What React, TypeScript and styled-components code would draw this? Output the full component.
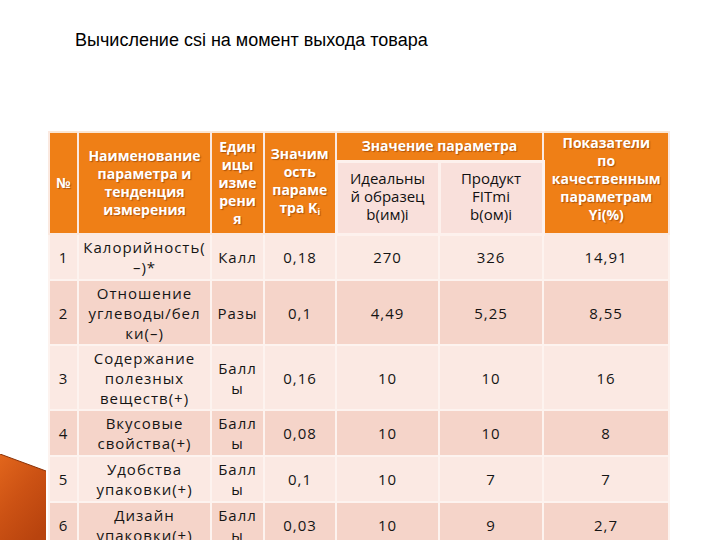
import styled, { createGlobalStyle } from "styled-components";

const GlobalStyle = createGlobalStyle`
  html, body {
    margin: 0;
    padding: 0;
    background: #ffffff;
  }
`;

type Row = {
  num: string;
  name: string[];
  unit: string[];
  weight: string;
  ideal: string;
  product: string;
  score: string;
  height: number;
};

const rows: Row[] = [
  { num: "1", name: ["Калорийность(", "–)*"], unit: ["Калл"], weight: "0,18", ideal: "270", product: "326", score: "14,91", height: 46 },
  { num: "2", name: ["Отношение", "углеводы/бел", "ки(–)"], unit: ["Разы"], weight: "0,1", ideal: "4,49", product: "5,25", score: "8,55", height: 65 },
  { num: "3", name: ["Содержание", "полезных", "веществ(+)"], unit: ["Балл", "ы"], weight: "0,16", ideal: "10", product: "10", score: "16", height: 65 },
  { num: "4", name: ["Вкусовые", "свойства(+)"], unit: ["Балл", "ы"], weight: "0,08", ideal: "10", product: "10", score: "8", height: 46 },
  { num: "5", name: ["Удобства", "упаковки(+)"], unit: ["Балл", "ы"], weight: "0,1", ideal: "10", product: "7", score: "7", height: 46 },
  { num: "6", name: ["Дизайн", "упаковки(+)"], unit: ["Балл", "ы"], weight: "0,03", ideal: "10", product: "9", score: "2,7", height: 46 },
];

const colWidths = [29, 133, 53, 72, 103, 104, 126];

// разбивка строк как на слайде
const lines = (parts: string[]) =>
  parts.map((p, i) => (
    <span key={i}>
      {p}
      {i < parts.length - 1 && <br />}
    </span>
  ));

export default function App() {
  return (
    <>
      <GlobalStyle />
      <Page>
        <Title>Вычисление csi на момент выхода товара</Title>
        <Body>
          <Gutter>
            <Corner viewBox="0 0 48 95" preserveAspectRatio="none">
              <defs>
                <linearGradient id="cornerFill" x1="0" y1="0" x2="0.6" y2="1">
                  <stop offset="0" stopColor="#e2661c" />
                  <stop offset="0.5" stopColor="#cc5214" />
                  <stop offset="1" stopColor="#b8430e" />
                </linearGradient>
              </defs>
              <polygon points="0,0 46,17 46,95 0,95" fill="url(#cornerFill)" />
              <line x1="0" y1="0" x2="46" y2="17" stroke="#8a3208" strokeWidth="1" />
            </Corner>
          </Gutter>
          <Table>
            <colgroup>
              {colWidths.map((w, i) => (
                <col key={i} style={{ width: w }} />
              ))}
            </colgroup>
            <thead>
              <tr style={{ height: 29 }}>
                <HeadCell rowSpan={2}>№</HeadCell>
                <HeadCell rowSpan={2}>
                  Наименование
                  <br />
                  параметра и
                  <br />
                  тенденция
                  <br />
                  измерения
                </HeadCell>
                <HeadCell rowSpan={2}>
                  Един
                  <br />
                  ицы
                  <br />
                  изме
                  <br />
                  рени
                  <br />я
                </HeadCell>
                <HeadCell rowSpan={2}>
                  Значим
                  <br />
                  ость
                  <br />
                  параме
                  <br />
                  тра K<sub>i</sub>
                </HeadCell>
                <HeadCell colSpan={2}>Значение параметра</HeadCell>
                <HeadCell rowSpan={2} $lift>
                  Показатели
                  <br />
                  по
                  <br />
                  качественным
                  <br />
                  параметрам
                  <br />
                  Yi(%)
                </HeadCell>
              </tr>
              <tr style={{ height: 73 }}>
                <SubCell>
                  Идеальны
                  <br />й образец
                  <br />
                  b(им)i
                </SubCell>
                <SubCell>
                  Продукт
                  <br />
                  FITmi
                  <br />
                  b(ом)i
                </SubCell>
              </tr>
            </thead>
            <tbody>
              {rows.map((r, i) => (
                <BodyRow key={r.num} $odd={i % 2 === 0} style={{ height: r.height }}>
                  <Cell>{r.num}</Cell>
                  <Cell>{lines(r.name)}</Cell>
                  <Cell>{lines(r.unit)}</Cell>
                  <Cell>{r.weight}</Cell>
                  <Cell>{r.ideal}</Cell>
                  <Cell>{r.product}</Cell>
                  <Cell>{r.score}</Cell>
                </BodyRow>
              ))}
            </tbody>
          </Table>
        </Body>
      </Page>
    </>
  );
}

const Page = styled.div`
  display: flex;
  flex-direction: column;

  width: 720px;
  height: 540px;

  background: #ffffff;

  overflow: hidden;
`;

const Title = styled.h1`
  margin: 30px 0 0 75px;

  color: #000000;

  font-family: "Liberation Sans", Arial, sans-serif;
  font-size: 18px;
  font-weight: 400;
  line-height: 20px;
`;

const Body = styled.div`
  display: flex;
  flex-direction: row;

  margin-top: 81px;
`;

const Gutter = styled.div`
  display: flex;
  flex-direction: column;
  justify-content: flex-end;

  flex: none;
  width: 48px;
`;

const Corner = styled.svg`
  display: block;

  width: 48px;
  height: 95px;
`;

const Table = styled.table`
  flex: none;
  width: 620px;

  border-collapse: collapse;
  table-layout: fixed;

  border-top: 2px solid #fbe6d2;

  font-family: "Open Sans", "Noto Sans", sans-serif;
`;

const HeadCell = styled.th<{ $lift?: boolean }>`
  padding: 0 0 ${(p) => (p.$lift ? "8px" : "0")};

  background: #ef7f16;
  border: 2px solid #fbe9e0;
  border-top: none;

  color: #ffffff;
  text-shadow: 1px 1px 1px rgba(120, 50, 0, 0.55);

  font-size: 14px;
  font-weight: 700;
  line-height: 18px;
  text-align: center;
  vertical-align: middle;

  sub {
    font-size: 9px;
    vertical-align: -2px;
  }
`;

const SubCell = styled.th`
  padding: 0 0 4px;

  background: #f9e0db;
  border: 3px solid #fdf1ed;

  color: #111111;

  font-size: 15px;
  font-weight: 400;
  line-height: 18px;
  text-align: center;
  vertical-align: middle;
`;

const BodyRow = styled.tr<{ $odd: boolean }>`
  background: ${(p) => (p.$odd ? "#fbe9e3" : "#f5d4c9")};
`;

const Cell = styled.td`
  padding: 0;

  border: 2px solid #fdf3ef;

  color: #151515;

  font-size: 15px;
  letter-spacing: 1px;
  line-height: 20px;
  text-align: center;
  vertical-align: middle;
`;
